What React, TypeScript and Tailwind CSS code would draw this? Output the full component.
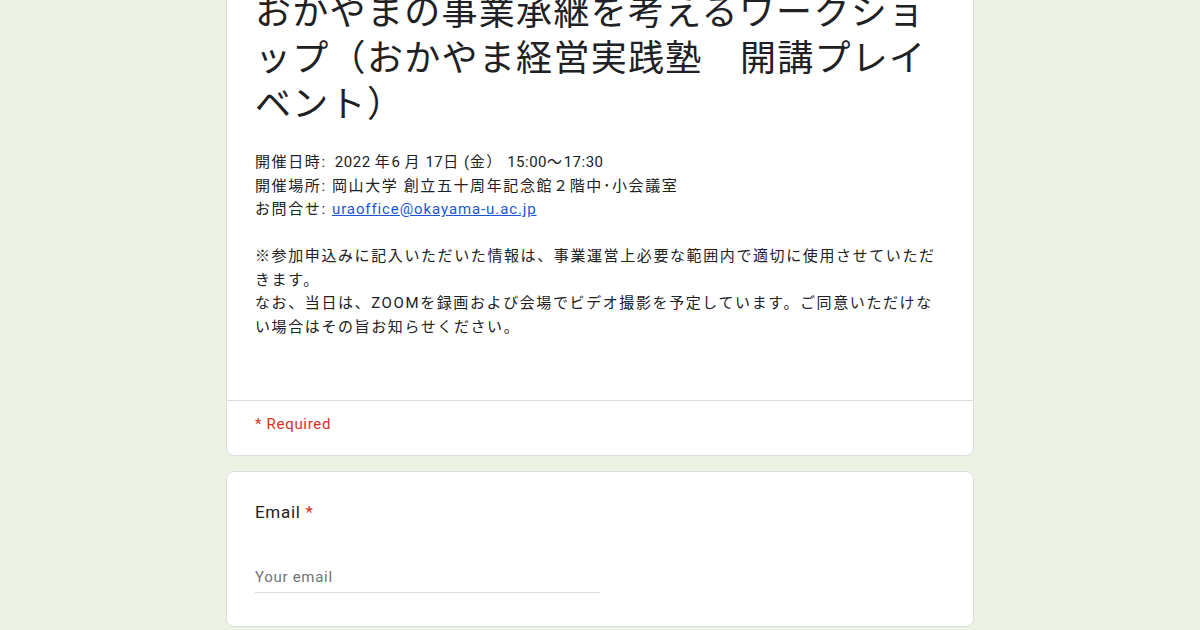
export default function App() {
  return (
    <div className="h-[630px] overflow-hidden bg-[#edf3e4] font-['Roboto','Noto_Sans_CJK_JP',sans-serif] text-[#202124]">
      <div className="mx-auto -mt-[40px] flex w-[748px] flex-col gap-[15px]">
        {/* Header card */}
        <div className="rounded-lg border border-[#dadce0] bg-white">
          <div className="pl-[28px] pr-[29px] pt-[29px] pb-[61px]">
            <h1 className="text-[36px] leading-[46px] tracking-[1.3px] font-normal">
              おかやまの事業承継を考えるワークショップ（おかやま経営実践塾　開講プレイベント）
            </h1>
            <div className="mt-[23px] text-[15px] leading-[23.5px] tracking-[1.6px]">
              <p>
                開催日時:<span className="ml-[4px] tracking-[0.5px]"> 2022 </span>年<span className="tracking-[0.5px]">6 </span>月
                <span className="tracking-[0.5px]"> 17</span>日<span className="tracking-[0.5px]"> (</span>金）
                <span className="tracking-[0.5px]"> 15:00</span>～<span className="tracking-[0.5px]">17:30</span>
              </p>
              <p>開催場所: 岡山大学 創立五十周年記念館２階中･小会議室</p>
              <p>
                お問合せ:{" "}
                <a href="#" className="text-[#1a57d6] underline tracking-[0.9px]">
                  uraoffice@okayama-u.ac.jp
                </a>
              </p>
              <p>&nbsp;</p>
              <p>
                ※参加申込みに記入いただいた情報は、事業運営上必要な範囲内で適切に使用させていただきます。
              </p>
              <p>
                なお、当日は、ZOOMを録画および会場でビデオ撮影を予定しています。ご同意いただけない場合はその旨お知らせください。
              </p>
            </div>
          </div>
          <div className="border-t border-[#dadce0] pl-[28px] pr-[29px] pt-[13px] pb-[21px] text-[15px] leading-[20px] tracking-[0.7px] text-[#d93025]">
            * Required
          </div>
        </div>

        {/* Email question */}
        <div className="rounded-lg border border-[#dadce0] bg-white pl-[28px] pr-[29px] pt-[28px] pb-[33px]">
          <div className="text-[17px] leading-[24px] tracking-[0.7px]">
            Email <span className="text-[#d93025]">*</span>
          </div>
          <div className="mt-[43px] w-[345px] border-b border-[#dadce0] pb-[5px] text-[15px] leading-[20px] tracking-[0.7px] text-[#70757a]">
            Your email
          </div>
        </div>
      </div>
    </div>
  );
}
